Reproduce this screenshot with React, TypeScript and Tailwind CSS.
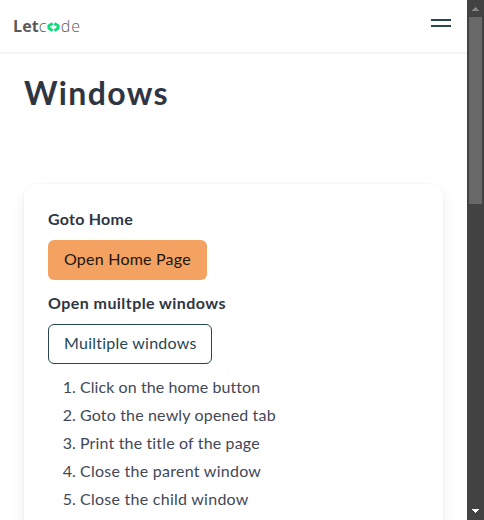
const steps = [
  { text: "Click on the home button", spacing: "tracking-[0.07px]" },
  { text: "Goto the newly opened tab", spacing: "tracking-[0.16px]" },
  { text: "Print the title of the page", spacing: "tracking-[0.15px]" },
  { text: "Close the parent window", spacing: "tracking-[0.26px]" },
  { text: "Close the child window", spacing: "tracking-[0.26px]" },
];

function Logo() {
  return (
    <div className="flex h-5 items-center font-['Open_Sans',sans-serif] text-[16px] leading-5 text-[#5b5b5b]">
      <span className="font-bold tracking-[0.1px]">Let</span>
      <span className="font-light tracking-[0.5px]">c</span>
      <svg className="mr-px mt-0.5 h-[10px] w-[13px]" viewBox="0 0 13 10" fill="none" stroke="#0bdc7c" strokeWidth="2.9" strokeLinejoin="round">
        <path d="M5.6 1.4 1.9 3.8v2.4l3.7 2.4M7.4 1.4l3.7 2.4v2.4L7.4 8.6" />
      </svg>
      <span className="font-light tracking-[0.9px]">de</span>
    </div>
  );
}

function Scrollbar() {
  return (
    <div className="flex h-full w-[17px] shrink-0 flex-col items-center bg-[#424242]">
      <svg className="h-[17px] w-[17px] shrink-0" viewBox="0 0 17 17" shapeRendering="crispEdges">
        <path d="M8 7h1v1h1v1h1v1h1v1H5v-1h1V9h1V8h1z" fill="#868686" />
      </svg>
      <div className="h-[187px] w-[13px] shrink-0 bg-[#686868]" />
      <svg className="mt-auto h-[17px] w-[17px] shrink-0" viewBox="0 0 17 17" shapeRendering="crispEdges">
        <path d="M5 6h7v1h-1v1h-1v1H9v1H8V9H7V8H6V7H5z" fill="#fff" />
      </svg>
    </div>
  );
}

export default function App() {
  return (
    <div className="flex h-[520px] w-[484px] overflow-hidden bg-white font-[Lato,sans-serif] text-base text-[#434857]">
      <main className="h-full min-w-0 flex-1 overflow-hidden">
        <header className="flex h-[54px] items-start justify-between border-b-2 border-[#f5f5f5] pl-[13px] pr-4">
          <div className="pt-4">
            <Logo />
          </div>
          <button aria-label="Menu" className="mt-[19px] flex w-5 flex-col gap-1">
            <span className="h-0.5 bg-[#264653]" />
            <span className="h-0.5 bg-[#264653]" />
          </button>
        </header>
        <div className="px-6 pt-[21px]">
          <h1 className="h-9 w-fit text-[32px] leading-9 font-bold tracking-[1.35px] whitespace-nowrap text-[#2f3542]">Windows</h1>
          <section className="mt-[73px] h-[500px] rounded-xl bg-white px-6 pt-[23px] shadow-[0_8px_16px_-2px_rgba(10,10,10,0.1),0_0_0_1px_rgba(10,10,10,0.02)]">
            <h2 className="w-fit leading-6 font-bold tracking-[0.25px] whitespace-nowrap text-[#2f3542]">Goto Home</h2>
            <button className="mt-[9px] flex h-10 w-[159px] items-center rounded-[6px] bg-[#f4a261] px-4 pb-0.5 tracking-[0.22px] whitespace-nowrap text-[#20160d]">
              Open Home Page
            </button>
            <h2 className="mt-[11px] w-fit leading-6 font-bold tracking-[0.44px] whitespace-nowrap text-[#2f3542]">Open muiltple windows</h2>
            <button className="mt-[9px] flex h-10 w-[164px] items-center rounded-[6px] border border-[#264653] px-[15px] pb-0.5 tracking-[0.25px] whitespace-nowrap text-[#264653]">
              Muiltiple windows
            </button>
            <ol className="mt-[11px] list-decimal space-y-1 pl-8">
              {steps.map((s) => (
                <li key={s.text} className="leading-6">
                  <span className={s.spacing}>{s.text}</span>
                </li>
              ))}
            </ol>
          </section>
        </div>
      </main>
      <Scrollbar />
    </div>
  );
}
